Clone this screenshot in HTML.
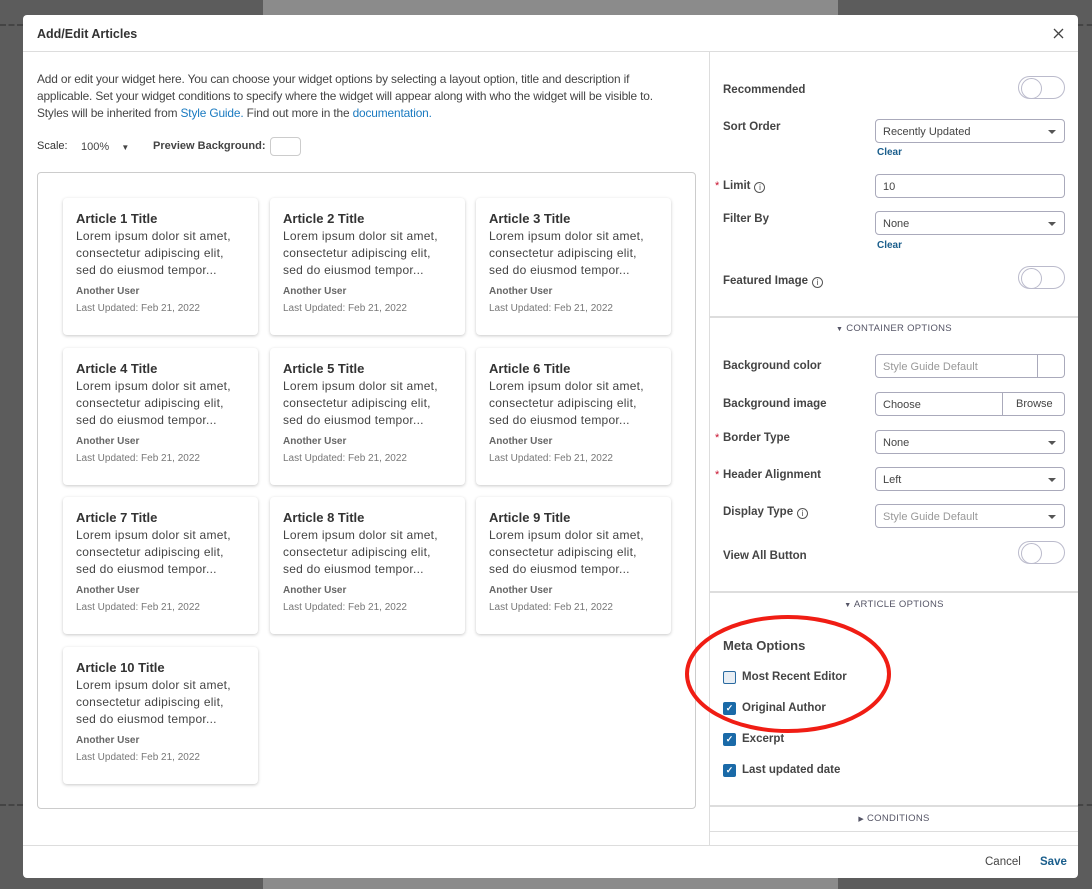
<!DOCTYPE html>
<html><head><style>
*{box-sizing:border-box;margin:0;padding:0}
body{width:1092px;height:889px;overflow:hidden;background:#5c5c5c;font-family:"Liberation Sans",sans-serif;position:relative;color:#333}
.a{position:absolute}
.bgp{left:263px;width:575px;background:#8b8b8b}
.dash{border-top:2px dashed #444;height:0}
#modal{left:23px;top:15px;width:1055px;height:863px;background:#fff;border-radius:4px}
.card{position:absolute;width:195px;height:137px;background:#fff;border-radius:4px;box-shadow:0 1px 3px rgba(0,0,0,.22);padding:13px 13px}
.card h4{font-size:13px;font-weight:bold;color:#333;margin-bottom:2px}
.card p{font-size:12px;line-height:17px;color:#444;letter-spacing:0.25px;white-space:nowrap}
.card .u{font-size:10px;font-weight:bold;color:#666;margin-top:7px}
.card .d{font-size:10px;color:#777;margin-top:6px}
.lbl{position:absolute;left:723px;font-size:11.5px;font-weight:bold;color:#444}
.req{position:absolute;left:715px;color:#c8102e;font-size:11px}
.inp{position:absolute;left:875px;width:190px;height:24px;border:1px solid #aab;border-radius:4px;font-size:11px;padding:6px 7px;color:#444}
.inp.s::after{content:"";position:absolute;right:8px;top:10px;border:4px solid transparent;border-top:4px solid #555;border-bottom:0}
.ph{color:#999}
.clr{position:absolute;left:877px;font-size:10px;font-weight:bold;color:#1a5e8c}
.tog{position:absolute;left:1018px;width:47px;height:23px;border:1px solid #bbc;border-radius:12px}
.tog::after{content:"";position:absolute;left:2px;top:1px;width:19px;height:19px;border:1px solid #bbc;border-radius:50%}
.info{display:inline-block;width:11px;height:11px;border:1px solid #555;border-radius:50%;font-size:8px;text-align:center;line-height:9px;font-weight:normal;margin-left:4px;vertical-align:-1px}
.sec{position:absolute;left:710px;width:368px;text-align:center;font-size:9.5px;color:#556;letter-spacing:.3px}
.hr{position:absolute;left:710px;width:368px;border-top:2px solid #ddd}
.cb{position:absolute;left:723px;width:13px;height:13px;border-radius:2px;background:#1a6aa8;color:#fff;font-size:9px;text-align:center;line-height:13px;font-weight:bold}
.cbl{position:absolute;left:742px;font-size:11.5px;font-weight:bold;color:#444}
</style></head><body>
<div class="a bgp" style="top:0;height:15px"></div>
<div class="a bgp" style="top:878px;height:11px"></div>
<div class="a dash" style="left:0;top:24px;width:23px"></div>
<div class="a dash" style="left:1078px;top:24px;width:14px"></div>
<div class="a dash" style="left:0;top:804px;width:23px"></div>
<div class="a dash" style="left:1078px;top:804px;width:14px"></div>
<div class="a" id="modal"></div>
<div class="a" style="left:37px;top:27px;font-size:12.5px;font-weight:bold;color:#333">Add/Edit Articles</div>
<svg class="a" style="left:1053px;top:28px" width="11" height="11"><path d="M1 1L10 10M10 1L1 10" stroke="#444" stroke-width="1.3"/></svg>
<div class="a" style="left:23px;top:51px;width:1055px;border-top:1px solid #ddd"></div>
<div class="a" style="left:709px;top:51px;height:794px;border-left:1px solid #ddd"></div>
<div class="a" style="left:23px;top:845px;width:1055px;border-top:1px solid #ddd"></div>
<div class="a" style="left:37px;top:71px;font-size:11.9px;line-height:17px;color:#444;white-space:nowrap;letter-spacing:-0.15px">Add or edit your widget here. You can choose your widget options by selecting a layout option, title and description if<br>applicable. Set your widget conditions to specify where the widget will appear along with who the widget will be visible to.<br>Styles will be inherited from <span style="color:#1a7ac0">Style Guide.</span> Find out more in the <span style="color:#1a7ac0">documentation.</span></div>
<div class="a" style="left:37px;top:140px;font-size:11px;color:#333">Scale:</div>
<div class="a" style="left:81px;top:141px;font-size:11px;color:#444">100% &nbsp;&nbsp; <span style="font-size:8px">▼</span></div>
<div class="a" style="left:153px;top:140px;font-size:11px;font-weight:bold;color:#444">Preview Background:</div>
<div class="a" style="left:270px;top:137px;width:31px;height:19px;border:1px solid #ccc;border-radius:4px"></div>
<div class="a" style="left:37px;top:172px;width:659px;height:637px;border:1px solid #ccc;border-radius:4px"></div>

<div class="card" style="left:63px;top:198px"><h4>Article 1 Title</h4><p>Lorem ipsum dolor sit amet,<br>consectetur adipiscing elit,<br>sed do eiusmod tempor...</p><div class="u">Another User</div><div class="d">Last Updated: Feb 21, 2022</div></div>
<div class="card" style="left:270px;top:198px"><h4>Article 2 Title</h4><p>Lorem ipsum dolor sit amet,<br>consectetur adipiscing elit,<br>sed do eiusmod tempor...</p><div class="u">Another User</div><div class="d">Last Updated: Feb 21, 2022</div></div>
<div class="card" style="left:476px;top:198px"><h4>Article 3 Title</h4><p>Lorem ipsum dolor sit amet,<br>consectetur adipiscing elit,<br>sed do eiusmod tempor...</p><div class="u">Another User</div><div class="d">Last Updated: Feb 21, 2022</div></div>
<div class="card" style="left:63px;top:348px"><h4>Article 4 Title</h4><p>Lorem ipsum dolor sit amet,<br>consectetur adipiscing elit,<br>sed do eiusmod tempor...</p><div class="u">Another User</div><div class="d">Last Updated: Feb 21, 2022</div></div>
<div class="card" style="left:270px;top:348px"><h4>Article 5 Title</h4><p>Lorem ipsum dolor sit amet,<br>consectetur adipiscing elit,<br>sed do eiusmod tempor...</p><div class="u">Another User</div><div class="d">Last Updated: Feb 21, 2022</div></div>
<div class="card" style="left:476px;top:348px"><h4>Article 6 Title</h4><p>Lorem ipsum dolor sit amet,<br>consectetur adipiscing elit,<br>sed do eiusmod tempor...</p><div class="u">Another User</div><div class="d">Last Updated: Feb 21, 2022</div></div>
<div class="card" style="left:63px;top:497px"><h4>Article 7 Title</h4><p>Lorem ipsum dolor sit amet,<br>consectetur adipiscing elit,<br>sed do eiusmod tempor...</p><div class="u">Another User</div><div class="d">Last Updated: Feb 21, 2022</div></div>
<div class="card" style="left:270px;top:497px"><h4>Article 8 Title</h4><p>Lorem ipsum dolor sit amet,<br>consectetur adipiscing elit,<br>sed do eiusmod tempor...</p><div class="u">Another User</div><div class="d">Last Updated: Feb 21, 2022</div></div>
<div class="card" style="left:476px;top:497px"><h4>Article 9 Title</h4><p>Lorem ipsum dolor sit amet,<br>consectetur adipiscing elit,<br>sed do eiusmod tempor...</p><div class="u">Another User</div><div class="d">Last Updated: Feb 21, 2022</div></div>
<div class="card" style="left:63px;top:647px"><h4>Article 10 Title</h4><p>Lorem ipsum dolor sit amet,<br>consectetur adipiscing elit,<br>sed do eiusmod tempor...</p><div class="u">Another User</div><div class="d">Last Updated: Feb 21, 2022</div></div>

<!-- right panel -->
<div class="lbl" style="top:84px">Recommended</div><div class="tog" style="top:76px"></div>
<div class="lbl" style="top:121px">Sort Order</div><div class="inp s" style="top:119px">Recently Updated</div><div class="clr" style="top:147px">Clear</div>
<div class="req" style="top:180px">*</div><div class="lbl" style="top:180px">Limit<span class="info">i</span></div><div class="inp" style="top:174px">10</div>
<div class="lbl" style="top:213px">Filter By</div><div class="inp s" style="top:211px">None</div><div class="clr" style="top:240px">Clear</div>
<div class="lbl" style="top:275px">Featured Image<span class="info">i</span></div><div class="tog" style="top:266px"></div>
<div class="hr" style="top:316px"></div>
<div class="sec" style="top:323px"><span style="font-size:7px">▼</span> CONTAINER OPTIONS</div>
<div class="lbl" style="top:360px">Background color</div><div class="inp" style="top:354px"><span class="ph">Style Guide Default</span><span class="a" style="left:161px;top:0;height:22px;border-left:1px solid #aab"></span></div>
<div class="lbl" style="top:398px">Background image</div><div class="inp" style="top:392px">Choose<span class="a" style="left:126px;top:0;height:22px;border-left:1px solid #aab;padding:5px 0 0 13px;width:62px">Browse</span></div>
<div class="req" style="top:432px">*</div><div class="lbl" style="top:432px">Border Type</div><div class="inp s" style="top:430px">None</div>
<div class="req" style="top:469px">*</div><div class="lbl" style="top:469px">Header Alignment</div><div class="inp s" style="top:467px">Left</div>
<div class="lbl" style="top:506px">Display Type<span class="info">i</span></div><div class="inp s" style="top:504px"><span class="ph">Style Guide Default</span></div>
<div class="lbl" style="top:550px">View All Button</div><div class="tog" style="top:541px"></div>
<div class="hr" style="top:591px"></div>
<div class="sec" style="top:599px"><span style="font-size:7px">▼</span> ARTICLE OPTIONS</div>
<div class="a" style="left:723px;top:638px;font-size:13px;font-weight:bold;color:#444">Meta Options</div>
<div class="cb" style="top:671px;background:#e8eef4;border:1px solid #2a6aa0"></div><div class="cbl" style="top:671px">Most Recent Editor</div>
<div class="cb" style="top:702px">✓</div><div class="cbl" style="top:702px">Original Author</div>
<div class="cb" style="top:733px">✓</div><div class="cbl" style="top:733px">Excerpt</div>
<div class="cb" style="top:764px">✓</div><div class="cbl" style="top:764px">Last updated date</div>
<div class="hr" style="top:805px"></div>
<div class="sec" style="top:813px"><span style="font-size:7px">▶</span> CONDITIONS</div>
<div class="a" style="left:710px;top:831px;width:368px;border-top:1px solid #ddd"></div>
<svg class="a" style="left:684px;top:614px" width="212" height="124"><ellipse cx="104" cy="60" rx="101" ry="57" fill="none" stroke="#f01d14" stroke-width="4"/></svg>
<div class="a" style="left:985px;top:856px;font-size:11.5px;color:#444">Cancel</div>
<div class="a" style="left:1040px;top:856px;font-size:11.5px;font-weight:bold;color:#1a5e8c">Save</div>
</body></html>
